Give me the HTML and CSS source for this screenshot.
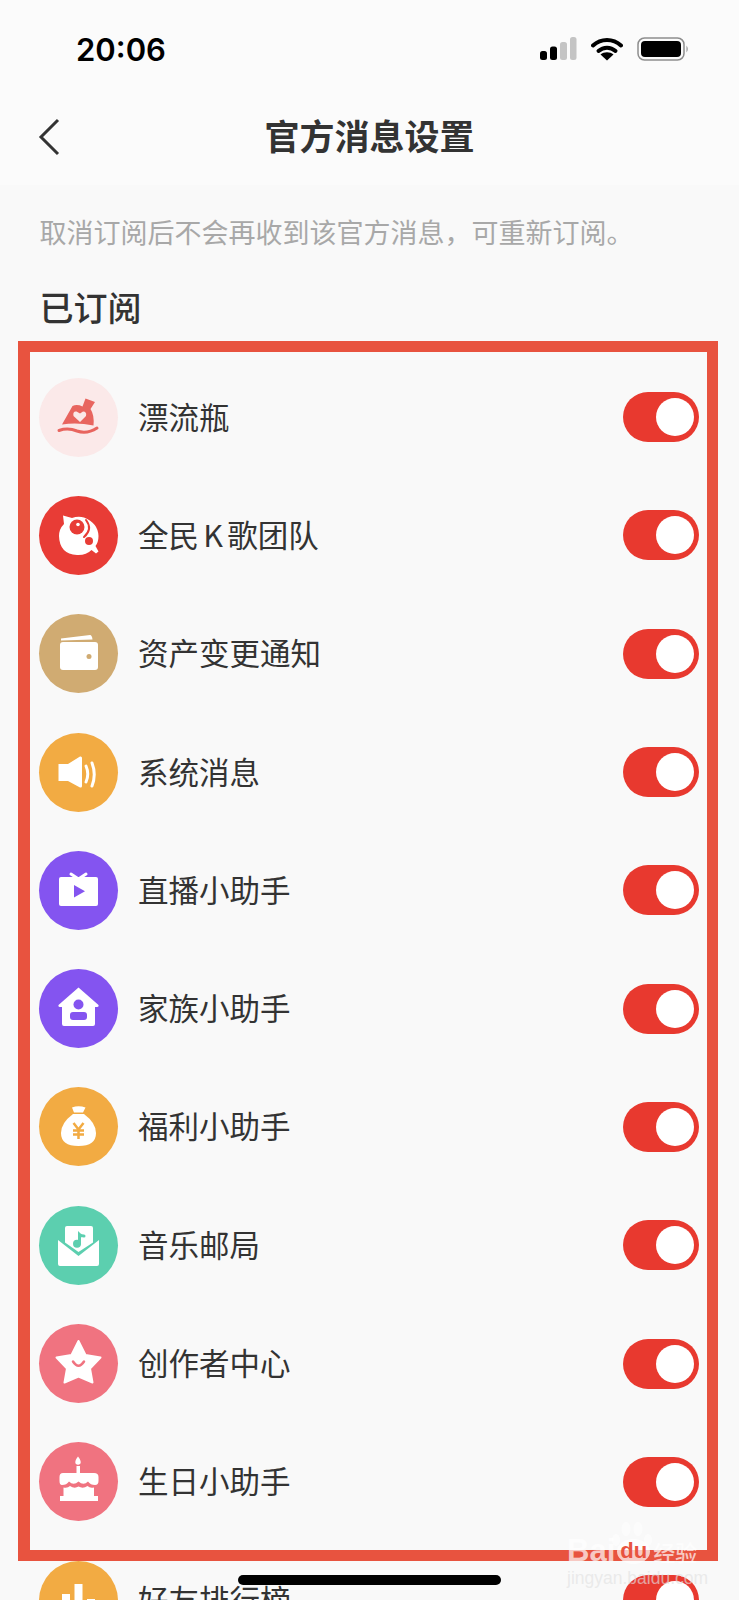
FILE: index.html
```html
<!DOCTYPE html>
<html lang="zh-CN">
<head>
<meta charset="utf-8">
<title>官方消息设置</title>
<link rel="stylesheet" href="styles.css">
</head>
<body>
<div class="page">
  <header class="header">
    <div class="statusbar">
      <span class="time">20:06</span>
      <div class="status-icons">
        <svg class="signal" width="37" height="24" viewBox="0 0 37 24"><rect class="on" x="0" y="14" width="7" height="9" rx="2.500"/><rect class="on" x="10" y="9.500" width="7" height="13.500" rx="2.500"/><rect class="off" x="20" y="5" width="7" height="18" rx="2.500"/><rect class="off" x="30" y="0" width="6.500" height="23" rx="2.500"/></svg>
        <svg class="wifi" width="32" height="24" viewBox="0 0 32 24"><path class="wave" d="M2 8.500C10 1 22 1 30 8.500"/><path class="wave" d="M7.500 14C12.500 9.500 19.500 9.500 24.500 14"/><path class="tip" d="M16 23.500L9.500 17.500C13 14.500 19 14.500 22.500 17.500Z"/></svg>
        <svg class="battery" width="52" height="24" viewBox="0 0 52 24"><rect class="shell" x="1" y="1" width="46" height="22" rx="6.500"/><rect class="charge" x="4" y="4" width="40" height="16" rx="4"/><path class="cap" d="M49.500 8.500Q52 12 49.500 15.500Z"/></svg>
      </div>
    </div>
    <nav class="nav">
      <svg class="back" width="24" height="38" viewBox="0 0 24 38"><path d="M20 2L3 19L20 36"/></svg>
      <h1 class="title">官方消息设置</h1>
    </nav>
  </header>

  <p class="notice">取消订阅后不会再收到该官方消息&#xFF0C;可重新订阅。</p>
  <h2 class="section">已订阅</h2>

  <ul class="list">
    <li class="row">
      <div class="icon tint-blush">
        <svg viewBox="0 0 79 79"><path fill="#e8655f" d="M46.500 20.500L56 24L51.500 31Q55.500 37 54.500 47.500Q38 44 23 46.500L33.500 28Q38 26 43.500 28.500Z"/><path fill="#fbe9e9" d="M41 44L34.500 38Q33.500 33 37.500 33.500L41 35.500L44 33.500Q48 33.500 47 38Z"/><path class="line" stroke="#e8655f" d="M20 52.500Q29 49.500 38 53Q48 56.500 58 50"/></svg>
      </div>
      <span class="label">漂流瓶</span>
      <span class="toggle"><i class="knob"></i></span>
    </li>
    <li class="row">
      <div class="icon tint-red">
        <svg viewBox="0 0 79 79"><path fill="#fff" d="M24 19.500L33 22Q39 20 45 21.500Q59 27 59.500 40Q59.500 46 56.500 50L59.500 55.500L57 57.500L52.500 54Q47 59.500 38 59Q20.500 58 20 40Q20 33 25 28Z"/><circle fill="#e83c36" cx="38" cy="31" r="7.500"/><circle fill="#fff" cx="39" cy="28.500" r="1.800"/><path class="arc" d="M47 24Q54 33 45 41"/><circle fill="#e83c36" cx="50" cy="45" r="4"/></svg>
      </div>
      <span class="label">全民 K 歌团队</span>
      <span class="toggle"><i class="knob"></i></span>
    </li>
    <li class="row">
      <div class="icon tint-tan">
        <svg viewBox="0 0 79 79"><path fill="#fff" d="M22 24.500L51 21Q53 21 53.500 25.500L22 26.500Z"/><rect fill="#fff" x="21" y="28" width="38" height="28" rx="3"/><circle fill="#d0ab72" cx="50" cy="42.500" r="2.500"/></svg>
      </div>
      <span class="label">资产变更通知</span>
      <span class="toggle"><i class="knob"></i></span>
    </li>
    <li class="row">
      <div class="icon tint-orange">
        <svg viewBox="0 0 79 79"><path fill="#fff" d="M19.500 31H29L41 23.500Q43 23 43 25V53Q43 55 41 54.500L29 48H19.500Z"/><path class="thin" d="M47 33Q50.500 41 47 49"/><path class="thin" d="M53 30Q57.500 41.500 53 53"/></svg>
      </div>
      <span class="label">系统消息</span>
      <span class="toggle"><i class="knob"></i></span>
    </li>
    <li class="row">
      <div class="icon tint-purple">
        <svg viewBox="0 0 79 79"><path class="line" stroke="#fff" d="M32 23L38 27M47 23L41 27"/><rect fill="#fff" x="20" y="26" width="39" height="29" rx="2"/><path fill="#8454f0" d="M35 34V46.500L46 40.300Z"/></svg>
      </div>
      <span class="label">直播小助手</span>
      <span class="toggle"><i class="knob"></i></span>
    </li>
    <li class="row">
      <div class="icon tint-purple">
        <svg viewBox="0 0 79 79"><path fill="#fff" d="M39.500 18.500L59.500 36Q60 38 58 38H56V55Q56 57 54 57H25Q23 57 23 55V38H21Q19 38 19.500 36Z"/><circle fill="#8454f0" cx="39.500" cy="35.500" r="5"/><rect fill="#8454f0" x="31" y="43" width="17" height="8" rx="3"/></svg>
      </div>
      <span class="label">家族小助手</span>
      <span class="toggle"><i class="knob"></i></span>
    </li>
    <li class="row">
      <div class="icon tint-orange">
        <svg viewBox="0 0 79 79"><path fill="#fff" d="M33 20.500Q39.500 18 46.500 20.500L44 25.500H35Z"/><path fill="#fff" d="M34 27H45Q57 36 57 46Q57 59 39.500 59Q22 59 22 46Q22 36 34 27Z"/><path class="yen" d="M34.500 36L39.500 42.500L44.500 36M34 43.500H45M34 47.500H45M39.500 42.500V52"/></svg>
      </div>
      <span class="label">福利小助手</span>
      <span class="toggle"><i class="knob"></i></span>
    </li>
    <li class="row">
      <div class="icon tint-green">
        <svg viewBox="0 0 79 79"><path fill="#fff" d="M26 22Q26 20 28 20H52Q54 20 54 22V36.500L39.500 46L26 36.500Z"/><path fill="#fff" d="M19 34L39.500 50L60 34V58Q60 60 58 60H21Q19 60 19 58Z"/><circle fill="#5ccfaf" cx="38" cy="37.700" r="4"/><path class="note" d="M40.500 37.500V28.500Q42 30 45 30"/></svg>
      </div>
      <span class="label">音乐邮局</span>
      <span class="toggle"><i class="knob"></i></span>
    </li>
    <li class="row">
      <div class="icon tint-rose">
        <svg viewBox="0 0 79 79"><path class="star" d="M39.500 17L46.500 31L61.500 33.500L51 44.500L53.500 58.500L39.500 52.500L25.500 58.500L28 44.500L17.500 33.500L32.500 31Z"/><path class="smile" d="M34 37.500Q39.500 46 45 37.500"/></svg>
      </div>
      <span class="label">创作者中心</span>
      <span class="toggle"><i class="knob"></i></span>
    </li>
    <li class="row">
      <div class="icon tint-rose">
        <svg viewBox="0 0 79 79"><path fill="#fff" d="M39 14.500Q42.500 19 41.500 21.500Q39 24 36.500 21.500Q35.500 19 39 14.500Z"/><rect fill="#fff" x="37.500" y="24" width="3.500" height="7"/><path fill="#fff" d="M24 31H55Q59.500 31 59.500 35V39Q59.500 43 56 43Q51.500 43 49 39.500Q44.500 44 39.500 39.500Q34.500 44 30 39.500Q27.500 43 23 43Q20.500 43 20.500 39V35Q20.500 31 24 31Z"/><path fill="#fff" d="M24.500 45.500Q28.500 46.500 31 44Q35.500 47 39.500 44.500Q44 47 48.500 44Q51 46.500 55 45.500V54H59V59H21V54H24.500Z"/></svg>
      </div>
      <span class="label">生日小助手</span>
      <span class="toggle"><i class="knob"></i></span>
    </li>
    <li class="row">
      <div class="icon tint-orange">
        <svg viewBox="0 0 79 79"><rect fill="#fff" x="23" y="33" width="8" height="24"/><rect fill="#fff" x="35.500" y="23" width="8" height="34"/><rect fill="#fff" x="48" y="38" width="8" height="19"/></svg>
      </div>
      <span class="label">好友排行榜</span>
      <span class="toggle"><i class="knob"></i></span>
    </li>
  </ul>

  <div class="frame"></div>
  <div class="watermark">
    <svg class="paw" width="46" height="30" viewBox="0 0 46 30"><ellipse cx="7" cy="20" rx="4" ry="6"/><ellipse cx="17" cy="9" rx="4.500" ry="7"/><ellipse cx="29" cy="9" rx="4.500" ry="7"/><ellipse cx="39" cy="20" rx="4" ry="6"/></svg>
    <div class="wm-brand">Bai<span class="wm-du">du</span><span class="wm-cn">经验</span></div>
    <div class="wm-url">jingyan.baidu.com</div>
  </div>
  <div class="homebar"></div>
</div>
</body>
</html>
```

FILE: styles.css
```css
* { box-sizing: border-box; }

html, body {
  margin: 0;
  padding: 0;
}

body {
  background: #f9f9f9;
  color: #333;
  font-family: "Noto Sans CJK SC", "Noto Sans", sans-serif;
}

.page {
  position: relative;
  width: 739px;
  height: 1600px;
  overflow: hidden;
}

.header {
  background: #fbfbfb;
  height: 185px;
}

.statusbar {
  display: flex;
  align-items: center;
  justify-content: space-between;
  height: 98px;
  padding: 0 50px 0 76px;
}

.time {
  color: #000;
  font-family: "Inter", "Liberation Sans", sans-serif;
  font-size: 31px;
  font-weight: 600;
}

.status-icons {
  display: flex;
  align-items: center;
  gap: 14px;
}

.signal .on, .wifi .tip, .battery .charge { fill: #000; }
.signal .off { fill: #c4c4c4; }
.wifi .wave {
  fill: none;
  stroke: #000;
  stroke-width: 4;
  stroke-linecap: round;
}
.battery .shell {
  fill: none;
  stroke: #8e8e8e;
  stroke-width: 1.500;
}
.battery .cap { fill: #8e8e8e; }

.nav {
  display: flex;
  align-items: center;
  justify-content: center;
  position: relative;
  height: 78px;
}

.back {
  position: absolute;
  left: 38px;
  top: 20px;
}
.back path {
  fill: none;
  stroke: #333;
  stroke-width: 3;
}

.title {
  margin: 0 0 4px;
  font-size: 35px;
  font-weight: 700;
  line-height: 74px;
  color: #333;
}

.notice {
  margin: 27px 0 0;
  padding-left: 39.500px;
  font-size: 27px;
  line-height: 40px;
  color: #a8a8a8;
}

.section {
  margin: 33px 0 0;
  padding-left: 39.500px;
  font-size: 34px;
  font-weight: 500;
  line-height: 44px;
  color: #333;
}

.list {
  list-style: none;
  margin: 29px 0 0;
  padding: 0;
}

.row {
  display: flex;
  align-items: center;
  height: 118.300px;
  padding: 0 40px 0 39px;
}

.icon {
  flex: none;
  width: 79px;
  height: 79px;
  border-radius: 50%;
}
.icon svg {
  display: block;
  width: 79px;
  height: 79px;
}

.tint-blush { background: #fbe9e9; }
.tint-red { background: #e83c36; }
.tint-tan { background: #d0ab72; }
.tint-orange { background: #f2ab43; }
.tint-purple { background: #8454f0; }
.tint-green { background: #5ccfaf; }
.tint-rose { background: #f07380; }

.icon .line {
  fill: none;
  stroke-width: 3;
  stroke-linecap: round;
}
.icon .arc {
  fill: none;
  stroke: #e83c36;
  stroke-width: 2;
  stroke-linecap: round;
}
.icon .thin {
  fill: none;
  stroke: #fff;
  stroke-width: 3;
  stroke-linecap: round;
}
.icon .yen {
  fill: none;
  stroke: #f2ab43;
  stroke-width: 2.500;
}
.icon .note {
  fill: none;
  stroke: #5ccfaf;
  stroke-width: 3;
  stroke-linecap: round;
}
.icon .star {
  fill: #fff;
  stroke: #fff;
  stroke-width: 2;
  stroke-linejoin: round;
}
.icon .smile {
  fill: none;
  stroke: #f07380;
  stroke-width: 2.500;
  stroke-linecap: round;
}

.label {
  margin-left: 20px;
  padding-bottom: 3px;
  font-size: 30.500px;
  line-height: 44px;
  word-spacing: -2.500px;
  color: #333;
}

.toggle {
  display: flex;
  align-items: center;
  justify-content: flex-end;
  flex: none;
  width: 76px;
  height: 50px;
  margin-left: auto;
  padding-right: 5px;
  border-radius: 25px;
  background: #e8392f;
}

.knob {
  display: block;
  width: 38px;
  height: 38px;
  border-radius: 50%;
  background: #fff;
}

.frame {
  position: absolute;
  left: 18px;
  top: 341px;
  width: 700px;
  height: 1220px;
  border: 11px solid #e8533f;
  border-left-width: 12px;
}

.homebar {
  position: absolute;
  left: 238px;
  top: 1575px;
  width: 263px;
  height: 10px;
  border-radius: 5px;
  background: #000;
}

.watermark {
  position: absolute;
  left: 567px;
  top: 1520px;
  width: 135px;
  color: rgba(255, 255, 255, 0.7);
}

.paw {
  position: absolute;
  left: 42px;
  top: 0;
  fill: rgba(255, 255, 255, 0.55);
}

.wm-brand {
  display: flex;
  align-items: center;
  margin-top: 18px;
  height: 26px;
  font-family: "Liberation Sans", sans-serif;
  font-size: 31px;
  font-weight: 700;
  white-space: nowrap;
}

.wm-du {
  margin-left: 2px;
  padding: 0 3px 1px;
  border-radius: 50%;
  background: rgba(255, 255, 255, 0.7);
  color: #e8533f;
  font-size: 22px;
  line-height: 24px;
}

.wm-cn {
  margin-left: 3px;
  font-family: "Noto Sans CJK SC", sans-serif;
  font-size: 22px;
  font-weight: 500;
}

.wm-url {
  margin-top: 4px;
  font-family: "Liberation Sans", sans-serif;
  font-size: 17.500px;
  line-height: 20px;
  white-space: nowrap;
  color: rgba(225, 225, 225, 0.65);
}
```
